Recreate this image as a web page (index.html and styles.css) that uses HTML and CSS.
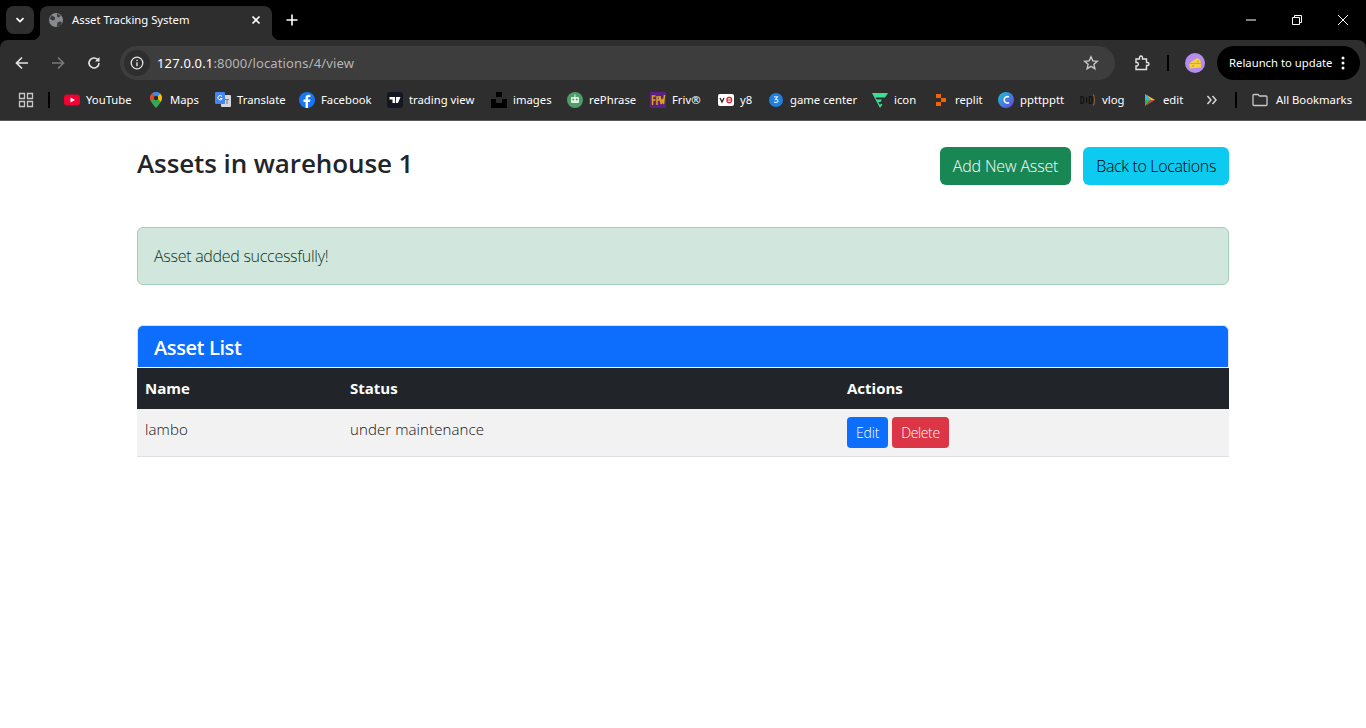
FILE: index.html
```html
<!DOCTYPE html>
<html lang="en">
<head>
  <meta charset="UTF-8">
  <meta name="viewport" content="width=device-width, initial-scale=1.0">
  <title>Asset Tracking System</title>
  <link rel="stylesheet" href="styles.css">
</head>
<body>
  <div class="browser">
    <div class="tabstrip">
      <button class="tab-search">
        <svg width="12" height="12" viewBox="0 0 12 12"><path d="M2.5 4.2 6 7.6l3.5-3.4" fill="none" stroke="#fff" stroke-width="1.7"/></svg>
      </button>
      <div class="tab">
        <svg class="tab-icon" width="14" height="14" viewBox="0 0 16 16"><circle cx="8" cy="8" r="8" fill="#8a8b8d"/><path d="M3 2.500 7 5 6.500 8 4 8.500 1 6.500zM9 16l.5-5 3-1.500 2.500 1.500-2 3.500zM9.500 0.500 13.500 3 11 5 9 4z" fill="#3a3b3d"/></svg>
        <span class="tab-title">Asset Tracking System</span>
        <svg class="tab-close" width="10" height="10" viewBox="0 0 10 10"><path d="M1.500 1.500l7 7m0-7l-7 7" stroke="#fff" stroke-width="1.600"/></svg>
      </div>
      <svg class="new-tab" width="12" height="12" viewBox="0 0 12 12"><path d="M6 .5v11M.5 6h11" stroke="#fff" stroke-width="1.600"/></svg>
      <div class="window-btns">
        <svg width="12" height="12" viewBox="0 0 12 12"><path d="M1 6h10" stroke="#fff" stroke-width="1"/></svg>
        <svg width="12" height="12" viewBox="0 0 12 12"><path d="M1.500 3.500h7v7h-7zM3.500 3.500v-2h7v7h-2" fill="none" stroke="#fff" stroke-width="1"/></svg>
        <svg width="12" height="12" viewBox="0 0 12 12"><path d="M1 1l10 10m0-10L1 11" stroke="#fff" stroke-width="1"/></svg>
      </div>
    </div>

    <div class="toolbar">
      <svg class="nav-btn" width="14" height="14" viewBox="0 0 14 14"><path d="M13 7H2M7 1.500 1.500 7 7 12.500" fill="none" stroke="#e3e3e3" stroke-width="1.700"/></svg>
      <svg class="nav-btn" width="14" height="14" viewBox="0 0 14 14"><path d="M1 7h11M7 1.500 12.500 7 7 12.500" fill="none" stroke="#77787a" stroke-width="1.700"/></svg>
      <svg class="nav-btn" width="14" height="14" viewBox="0 0 14 14"><path d="M12 7a5 5 0 1 1-1.500-3.600L12 5" fill="none" stroke="#e3e3e3" stroke-width="1.600"/><path d="M12.500 1v4.500H8z" fill="#e3e3e3"/></svg>
      <div class="omnibox">
        <span class="site-info">
          <svg width="14" height="14" viewBox="0 0 14 14"><circle cx="7" cy="7" r="5.800" fill="none" stroke="#e3e3e3" stroke-width="1.300"/><path d="M7 6.200v4M7 3.800v1.300" stroke="#e3e3e3" stroke-width="1.400"/></svg>
        </span>
        <span class="url">127.0.0.1<span class="url-dim">:8000/locations/4/view</span></span>
        <svg class="star" width="16" height="16" viewBox="0 0 16 16"><path d="M8 1.800l1.800 4.100 4.500.4-3.400 3 1 4.400L8 11.400l-3.900 2.300 1-4.400-3.400-3 4.500-.4z" fill="none" stroke="#c7c7c7" stroke-width="1.400"/></svg>
      </div>
      <svg class="ext" width="18" height="16" viewBox="0 0 18 16"><path d="M2 4h3.500V2.500a1.500 1.500 0 0 1 3 0V4h4v3.500h1a1.500 1.500 0 0 1 0 3h-1V14.500H2v-3.500h1a1.800 1.800 0 0 0 0-3.500H2z" fill="none" stroke="#e3e3e3" stroke-width="1.400" transform="translate(1 0)"/></svg>
      <span class="sep"></span>
      <span class="avatar">
        <svg width="14" height="12" viewBox="0 0 14 12"><path d="M1 6.500 9 1c2.500.5 4 2.500 4 5v4.500L2 11.500z" fill="#f5cf3f"/><path d="M1 6.500h12" stroke="#d8a92a"/><circle cx="5" cy="9" r="1" fill="#d8a92a"/><circle cx="10" cy="4.500" r="1" fill="#d8a92a"/></svg>
      </span>
      <div class="relaunch">
        <span class="relaunch-text">Relaunch to update</span>
        <svg width="4" height="14" viewBox="0 0 4 14"><circle cx="2" cy="2" r="1.500" fill="#fff"/><circle cx="2" cy="7" r="1.500" fill="#fff"/><circle cx="2" cy="12" r="1.500" fill="#fff"/></svg>
      </div>
    </div>

    <div class="bookmarks">
      <svg class="apps" width="16" height="16" viewBox="0 0 16 16"><path d="M1.500 1.500h5v5h-5zM9.500 1.500h5v5h-5zM1.500 9.500h5v5h-5zM9.500 9.500h5v5h-5z" fill="none" stroke="#c7c7c7" stroke-width="1.300"/></svg>
      <span class="sep"></span>
      <a class="bm bm-youtube"><svg width="16" height="16" viewBox="0 0 16 16"><rect y="2.500" width="16" height="11" rx="3" fill="#f00033"/><path d="M6.500 5.500 11 8l-4.500 2.500z" fill="#fff"/></svg>YouTube</a>
      <a class="bm bm-maps"><svg width="16" height="16" viewBox="0 0 16 16"><path d="M8 0a6 6 0 0 0-6 6c0 4 6 10 6 10s6-6 6-10a6 6 0 0 0-6-6z" fill="#34a853"/><path d="M4 1.600A6 6 0 0 1 12 1.400L9.500 5 6 4z" fill="#4285f4"/><path d="M2 6c0-1.800.8-3.400 2-4.400L7 5 3 9.500A8 8 0 0 1 2 6z" fill="#ea4335"/><path d="M14 6c0 1.200-.5 2.500-1.200 3.700L9 6l3-4.600C13.200 2.500 14 4.200 14 6z" fill="#fbbc04"/><circle cx="8" cy="6" r="2.200" fill="#2a2a2a"/></svg>Maps</a>
      <a class="bm bm-translate"><svg width="16" height="16" viewBox="0 0 16 16"><rect x="6" y="3" width="10" height="12" rx="1" fill="#d5d7da"/><rect width="10" height="12" rx="1" fill="#4285f4"/><path d="M7 4.500A2.200 2.200 0 1 0 7.200 6.500H5.200" fill="none" stroke="#fff" stroke-width="1"/><path d="M10 7.500h4M12 7v5" stroke="#777" stroke-width="1"/></svg>Translate</a>
      <a class="bm bm-facebook"><svg width="16" height="16" viewBox="0 0 16 16"><circle cx="8" cy="8" r="8" fill="#1877f2"/><path d="M9 16v-6h2l.4-2.400H9V6.200c0-.8.400-1.200 1.200-1.200h1.200V3a10 10 0 0 0-1.800-.2C7.800 2.800 6.600 4 6.600 6v1.600H4.500V10h2.100v6z" fill="#fff"/></svg>Facebook</a>
      <a class="bm bm-tv"><svg width="16" height="16" viewBox="0 0 16 16"><rect width="16" height="16" rx="3" fill="#131722"/><path d="M2.500 5H8v6H5.500V7.500h-3zM9 5h4.500L11 11H8.800z" fill="#fff"/></svg>trading view</a>
      <a class="bm bm-images"><svg width="16" height="16" viewBox="0 0 16 16"><path d="M5 0h6v5H5zM0 7h5v4h6V7h5v9H0z" fill="#000"/></svg>images</a>
      <a class="bm bm-rephrase"><svg width="16" height="16" viewBox="0 0 16 16"><circle cx="8" cy="8" r="8" fill="#4f9d69"/><rect x="4" y="5" width="8" height="6" rx="1" fill="#e4f2e8"/><circle cx="6.200" cy="7.500" r="1" fill="#4f9d69"/><circle cx="9.800" cy="7.500" r="1" fill="#4f9d69"/><path d="M8 5V2.500" stroke="#e4f2e8"/></svg>rePhrase</a>
      <a class="bm bm-friv"><svg width="16" height="16" viewBox="0 0 16 16"><rect width="16" height="16" fill="#5c1f8a"/><path d="M2.500 13V4h3M2.500 8h3M7 13V5h2.500v3H7M10 4l1 8 1.500-5 1 5 1-9" fill="none" stroke="#d9a514" stroke-width="1.500"/></svg>Friv®</a>
      <a class="bm bm-y8"><svg width="16" height="12" viewBox="0 0 16 12"><rect width="16" height="12" rx="2" fill="#fff"/><path d="M2 4 4 8 6 4" fill="none" stroke="#222" stroke-width="1.300"/><rect x="9" y="3.500" width="4.500" height="5" rx="1.500" fill="none" stroke="#e2202c" stroke-width="1.300"/><path d="M9 6h4.500" stroke="#e2202c"/></svg>y8</a>
      <a class="bm bm-game"><svg width="16" height="16" viewBox="0 0 16 16"><circle cx="8" cy="8" r="7" fill="#1f7fe0"/><path d="M6 4.800h3.500L7.500 7.500c1.500-.2 2.500.4 2.500 1.500s-1 1.800-4 1.300" fill="none" stroke="#d6e8fb" stroke-width="1.200"/></svg>game center</a>
      <a class="bm bm-icon"><svg width="16" height="16" viewBox="0 0 16 16"><path d="M0 1h16l-3 4.500H3.500l1.200 2H10L8.500 10H6.200L8 13l1-1.500 1.500 1L8 16z" fill="#3ddc97"/></svg>icon</a>
      <a class="bm bm-replit"><svg width="16" height="16" viewBox="0 0 16 16"><path d="M3 2h5v4H3zM8 6h5v4H8zM3 10h5v4H3z" fill="#f26207"/></svg>replit</a>
      <a class="bm bm-ppt"><svg width="16" height="16" viewBox="0 0 16 16"><defs><linearGradient id="ca" x1="0" y1="0" x2="1" y2="1"><stop offset="0" stop-color="#19c6d6"/><stop offset="1" stop-color="#6a3de8"/></linearGradient></defs><circle cx="8" cy="8" r="8" fill="url(#ca)"/><path d="M10.800 5a3.200 3.200 0 1 0 .2 5.600" fill="none" stroke="#fff" stroke-width="1.500"/></svg>ppttpptt</a>
      <a class="bm bm-vlog"><svg width="16" height="16" viewBox="0 0 17 16"><path d="M1 4.500v7h1.200a2 2 0 0 0 1.800-2v-3a2 2 0 0 0-1.800-2zM7 5v6M10 4.500v7h1a2 2 0 0 0 2-2v-3a2 2 0 0 0-2-2z" fill="none" stroke="#111" stroke-width="1.300"/><path d="M14 2c2 2.500 2 9.500 0 12" fill="none" stroke="#8a5a34" stroke-width="1.300"/></svg>vlog</a>
      <a class="bm bm-edit"><svg width="16" height="16" viewBox="0 0 16 16"><path d="M4 2v6h6z" fill="#35b6f2"/><path d="M4 2l10 6h-4z" fill="#f4c430"/><path d="M4 14V8h6z" fill="#2fb457"/><path d="M4 14l10-6h-4z" fill="#e9423a"/></svg>edit</a>
      <svg class="more" width="12" height="10" viewBox="0 0 12 10"><path d="M1.500 1 5 5 1.500 9M6.500 1 10 5 6.500 9" fill="none" stroke="#d8d8d8" stroke-width="1.500"/></svg>
      <span class="sep"></span>
      <a class="bm bm-all"><svg width="16" height="14" viewBox="0 0 16 14"><path d="M1 2.500A1 1 0 0 1 2 1.500h4l1.500 1.500H14a1 1 0 0 1 1 1v7.500a1 1 0 0 1-1 1H2a1 1 0 0 1-1-1z" fill="none" stroke="#c7c7c7" stroke-width="1.300"/></svg>All Bookmarks</a>
    </div>
  </div>

  <div class="container">
    <div class="page-head">
      <h2>Assets in warehouse 1</h2>
      <div class="head-actions">
        <a class="btn btn-success" href="#">Add New Asset</a>
        <a class="btn btn-info" href="#">Back to Locations</a>
      </div>
    </div>

    <div class="alert">Asset added successfully!</div>

    <div class="card">
      <div class="card-header">Asset List</div>
      <table>
        <thead>
          <tr>
            <th class="col-name">Name</th>
            <th class="col-status">Status</th>
            <th>Actions</th>
          </tr>
        </thead>
        <tbody>
          <tr>
            <td>lambo</td>
            <td>under maintenance</td>
            <td>
              <a class="btn-sm btn-primary" href="#">Edit</a>
              <a class="btn-sm btn-danger" href="#">Delete</a>
            </td>
          </tr>
        </tbody>
      </table>
    </div>
  </div>
</body>
</html>
```

FILE: styles.css
```css
body {
  margin: 0;
  padding: 0;
  background: #fff;
  color: #212529;
  font-family: "Open Sans", "Noto Sans", sans-serif;
  overflow: hidden;
}

/* browser chrome */
.browser {
  font-family: "Noto Sans", sans-serif;
  font-size: 11.3px;
  color: #fff;
  background: #000;
}

.browser svg {
  flex: none;
}

.tabstrip {
  height: 40px;
  display: flex;
  align-items: flex-start;
}

.tab-search {
  width: 28px;
  height: 28px;
  margin: 6px;
  padding: 0;
  border: none;
  border-radius: 8px;
  background: #2e2e2e;
  display: flex;
  align-items: center;
  justify-content: center;
}

.tab {
  width: 232px;
  height: 34px;
  box-sizing: border-box;
  margin-top: 6px;
  padding: 0 11px 6px 9px;
  background: #2e2e2e;
  border-radius: 8px 8px 0 0;
  display: flex;
  align-items: center;
  position: relative;
}

/* the little curves where the tab meets the toolbar */
.tab::before,
.tab::after {
  content: "";
  position: absolute;
  bottom: 0;
  width: 8px;
  height: 8px;
}

.tab::before {
  left: -8px;
  background: radial-gradient(circle at 0 0, transparent 8px, #2e2e2e 8.5px);
}

.tab::after {
  right: -8px;
  background: radial-gradient(circle at 100% 0, transparent 8px, #2e2e2e 8.5px);
}

.tab-title {
  margin-left: 9px;
  padding-bottom: 2px;
  flex: 1;
}

.new-tab {
  margin: 14px 0 0 14px;
}

.window-btns {
  margin-left: auto;
  display: flex;
  gap: 34px;
  padding: 14px 17px 0 0;
}

.toolbar {
  height: 40px;
  box-sizing: border-box;
  padding: 6px 6px 0 15px;
  background: #2e2e2e;
  border-radius: 8px 8px 0 0;
  display: flex;
  align-items: center;
}

.nav-btn {
  margin-right: 22px;
}

.nav-btn:nth-child(3) {
  margin-right: 19px;
}

.omnibox {
  width: 995px;
  height: 34px;
  box-sizing: border-box;
  padding: 0 16px 0 4px;
  background: #3d3d3d;
  border-radius: 17px;
  display: flex;
  align-items: center;
  font-size: 13px;
  letter-spacing: .15px;
}

.site-info {
  width: 26px;
  height: 26px;
  border-radius: 50%;
  background: #2e2e2e;
  display: flex;
  align-items: center;
  justify-content: center;
}

.url {
  margin-left: 7px;
  flex: 1;
}

.url-dim {
  color: #b5b5b5;
}

.ext {
  margin-left: 18px;
}

.sep {
  width: 2px;
  height: 16px;
  background: #000;
  flex: none;
}

.toolbar .sep {
  margin-left: 16px;
}

.avatar {
  width: 20px;
  height: 20px;
  margin-left: 16px;
  border-radius: 50%;
  background: #b58cf0;
  display: flex;
  align-items: center;
  justify-content: center;
}

.relaunch {
  width: 143px;
  height: 34px;
  box-sizing: border-box;
  margin-left: 12px;
  padding: 0 15px 0 12px;
  background: #000;
  border-radius: 17px;
  display: flex;
  align-items: center;
  justify-content: space-between;
}

.relaunch-text {
  padding-bottom: 2px;
}

.bookmarks {
  height: 40px;
  background: #2e2e2e;
  border-bottom: 1px solid #5a5a5a;
  display: flex;
  align-items: center;
  padding-left: 18px;
  white-space: nowrap;
}

.apps {
  margin-right: 14px;
}

.bookmarks > .sep + .bm-youtube {
  margin-left: 14px;
}

.bm {
  display: flex;
  align-items: center;
  gap: 6px;
  flex: none;
  padding-bottom: 2px;
}

.bm svg {
  margin-top: 2px;
}

.bm-youtube { width: 84px; }
.bm-maps { width: 67px; }
.bm-translate { width: 84px; }
.bm-facebook { width: 88px; }
.bm-tv { width: 104px; }
.bm-images { width: 76px; }
.bm-rephrase { width: 83px; }
.bm-friv { width: 68px; }
.bm-y8 { width: 50px; }
.bm-game { width: 104px; }
.bm-icon { width: 61px; }
.bm-replit { width: 65px; }
.bm-ppt { width: 82px; }
.bm-vlog { width: 61px; }
.bm-edit { width: 65px; }

.more {
  margin-right: 17px;
}

.bm-all {
  margin-left: 15px;
  gap: 8px;
}

/* page */
.container {
  width: 1092px;
  margin: 0 auto;
}

.page-head {
  display: flex;
  justify-content: space-between;
  align-items: flex-start;
  padding-top: 26px;
}

h2 {
  margin: -1px 0 0;
  font-size: 26px;
  line-height: 34px;
  font-weight: 600;
  letter-spacing: -.1px;
}

.head-actions {
  display: flex;
  gap: 12px;
}

.btn {
  display: block;
  height: 38px;
  box-sizing: border-box;
  padding: 0 13px;
  border-radius: 6px;
  font-size: 16px;
  font-weight: 300;
  line-height: 38px;
  text-decoration: none;
}

.btn-success {
  background: #198754;
  color: #fff;
  letter-spacing: -.15px;
}

.btn-info {
  background: #0dcaf0;
  color: #000;
  letter-spacing: -.36px;
}

.alert {
  margin-top: 42px;
  height: 58px;
  box-sizing: border-box;
  padding: 0 16px;
  background: #d1e7dd;
  border: 1px solid #a3cfbb;
  border-radius: 6px;
  color: #0a3622;
  font-size: 16px;
  font-weight: 300;
  line-height: 56px;
  letter-spacing: -.28px;
}

.card {
  margin-top: 40px;
}

.card-header {
  height: 42px;
  box-sizing: border-box;
  padding-left: 16px;
  background: #0d6efd;
  border: 1px solid #dfe1e4;
  border-bottom: none;
  border-radius: 6px 6px 0 0;
  color: #fff;
  font-size: 20px;
  font-weight: 600;
  line-height: 44px;
  letter-spacing: -.4px;
}

table {
  width: 100%;
  margin-top: 1px;
  border-collapse: collapse;
  table-layout: fixed;
}

th {
  height: 41px;
  padding: 0 8px 2px;
  box-sizing: border-box;
  background: #212529;
  color: #fff;
  font-size: 15px;
  font-weight: 700;
  text-align: left;
}

.col-name {
  width: 205px;
}

.col-status {
  width: 497px;
}

td {
  height: 47px;
  padding: 0 8px;
  background: #f2f2f2;
  border-bottom: 1px solid #dee2e6;
  font-size: 15px;
  font-weight: 300;
  vertical-align: top;
  line-height: 40px;
  letter-spacing: .1px;
  color: #111;
}

.btn-sm {
  display: inline-block;
  height: 31px;
  margin-top: 8px;
  padding: 0 9px;
  border-radius: 4px;
  color: #fff;
  font-size: 14px;
  line-height: 31px;
  vertical-align: top;
  text-decoration: none;
  letter-spacing: -.2px;
}

.btn-primary {
  background: #0d6efd;
}

.btn-danger {
  background: #dc3545;
  letter-spacing: -.37px;
}
```
